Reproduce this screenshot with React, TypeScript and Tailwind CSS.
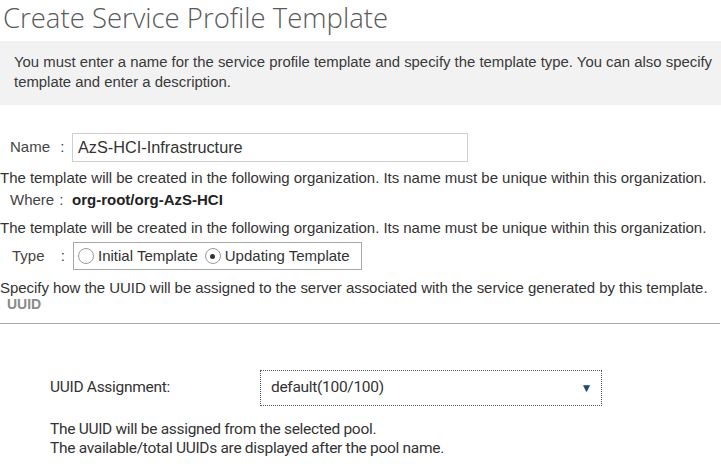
export default function App() {
  return (
    <div className="h-[474px] w-[721px] overflow-hidden bg-white font-['Liberation_Sans',Arial,sans-serif] text-[15px] text-[#333333]">
      <h1 className="pl-[3px] pt-[1px] font-['Open_Sans',sans-serif] text-[27.5px] font-light leading-[34px] text-[#5a5a5c]">
        Create Service Profile Template
      </h1>

      <div className="mt-[6px] h-[64px] whitespace-nowrap bg-[#f2f2f2] px-[14px] pt-[11px] text-[14.9px] leading-[20px] text-[#3a3a3a]">
        You must enter a name for the service profile template and specify the template type. You can also specify
        <br />
        template and enter a description.
      </div>

      <div className="mt-[28px] flex h-[29px] items-center">
        <span className="w-[72px] shrink-0 whitespace-nowrap pl-[10px] text-[#444]">
          Name <span className="ml-[6px]">:</span>
        </span>
        <div className="flex h-[29px] w-[396px] items-center border border-[#cfcfcf] px-[5px] text-[16.3px] text-[#333]">
          AzS-HCI-Infrastructure
        </div>
      </div>

      <p className="mt-[6px] whitespace-nowrap leading-[20px] tracking-[-0.03px]">
        The template will be created in the following organization. Its name must be unique within this organization.
      </p>
      <div className="mt-[2px] flex h-[20px] items-center">
        <span className="w-[72px] shrink-0 whitespace-nowrap pl-[10px] text-[#444]">
          Where <span className="ml-[1px]">:</span>
        </span>
        <span className="font-bold text-[#222]">org-root/org-AzS-HCI</span>
      </div>

      <p className="mt-[8px] whitespace-nowrap leading-[20px] tracking-[-0.03px]">
        The template will be created in the following organization. Its name must be unique within this organization.
      </p>

      <div className="mt-[4px] flex h-[28px] items-center">
        <span className="w-[73px] shrink-0 whitespace-nowrap pl-[12px] text-[#444]">
          Type <span className="ml-[12px]">:</span>
        </span>
        <div className="flex h-[28px] w-[289px] items-center gap-[4px] whitespace-nowrap border border-[#a8a8a8] px-[4px] text-[#333]">
          <span className="h-[16px] w-[16px] shrink-0 rounded-full border border-[#9a9a9a] bg-white" />
          <span className="mr-[3px]">Initial Template</span>
          <span className="flex h-[16px] w-[16px] shrink-0 items-center justify-center rounded-full border border-[#9a9a9a] bg-white">
            <span className="h-[5px] w-[5px] rounded-full bg-[#333]" />
          </span>
          <span>Updating Template</span>
        </div>
      </div>

      <p className="mt-[8px] whitespace-nowrap leading-[20px] tracking-[-0.05px]">
        Specify how the UUID will be assigned to the server associated with the service generated by this template.
      </p>
      <p className="mt-[-2px] pl-[7px] text-[14px] font-bold leading-[17px] text-[#8a8a8a]">UUID</p>

      <div className="mt-[10px] h-[1px] w-[720px] bg-[#a9a9a9]" />

      <div className="mt-[46px] flex h-[36px] items-center">
        <span className="w-[260px] shrink-0 pl-[50px] font-['Roboto',sans-serif] text-[15.5px] tracking-[-0.3px] text-[#333]">
          UUID Assignment:
        </span>
        <div className="flex h-[36px] w-[342px] items-center justify-between border border-dotted border-[#555] pl-[10px] pr-[9px] font-['Roboto',sans-serif] text-[15.5px] tracking-[-0.3px] text-[#333]">
          <span>default(100/100)</span>
          <span className="text-[12px] text-[#1e4b73]">▼</span>
        </div>
      </div>

      <div className="mt-[14px] whitespace-nowrap pl-[50px] font-['Roboto',sans-serif] text-[15.5px] leading-[19px] tracking-[-0.3px] text-[#333]">
        <p>The UUID will be assigned from the selected pool.</p>
        <p>The available/total UUIDs are displayed after the pool name.</p>
      </div>
    </div>
  );
}
